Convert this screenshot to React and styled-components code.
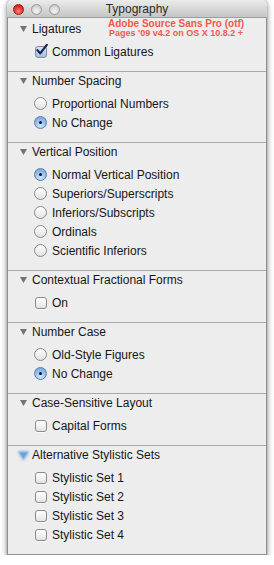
import React from "react";
import styled, { createGlobalStyle, css } from "styled-components";

const sections = [
    { title: "Ligatures", kind: "check", items: [{ label: "Common Ligatures", on: true }] },
    { title: "Number Spacing", kind: "radio", items: [{ label: "Proportional Numbers" }, { label: "No Change", on: true }] },
    {
        title: "Vertical Position",
        kind: "radio",
        items: [
            { label: "Normal Vertical Position", on: true },
            { label: "Superiors/Superscripts" },
            { label: "Inferiors/Subscripts" },
            { label: "Ordinals" },
            { label: "Scientific Inferiors" },
        ],
    },
    { title: "Contextual Fractional Forms", kind: "check", items: [{ label: "On" }] },
    { title: "Number Case", kind: "radio", items: [{ label: "Old-Style Figures" }, { label: "No Change", on: true }] },
    { title: "Case-Sensitive Layout", kind: "check", items: [{ label: "Capital Forms" }] },
    {
        title: "Alternative Stylistic Sets",
        kind: "check",
        focused: true,
        items: [
            { label: "Stylistic Set 1" },
            { label: "Stylistic Set 2" },
            { label: "Stylistic Set 3" },
            { label: "Stylistic Set 4" },
        ],
    },
];

export default function App() {
    return (
        <>
            <GlobalStyle />
            <Panel>
                <TitleBar>
                    <Lights>
                        <Light $color="red" />
                        <Light />
                        <Light />
                    </Lights>
                    <Title>Typography</Title>
                    <span />
                </TitleBar>
                <Note>
                    <NoteMain>Adobe Source Sans Pro (otf)</NoteMain>
                    <NoteSub>Pages '09 v4.2 on OS X 10.8.2 +</NoteSub>
                </Note>
                {sections.map((section, index) => (
                    <Section key={index} $first={index === 0}>
                        <Header>
                            <Disclosure focused={section.focused} />
                            {section.title}
                        </Header>
                        <Items>
                            {section.items.map((item, i) => (
                                <Row key={i}>
                                    {section.kind === "radio" ? (
                                        <Radio $on={item.on} />
                                    ) : (
                                        <Check $on={item.on}>
                                            {item.on && (
                                                <svg width="13" height="12" viewBox="0 0 13 12">
                                                    <path d="M2.5 6.2 L5.2 9.4 L11.8 0.8" fill="none" stroke="#1b2550" strokeWidth="2.2" strokeLinecap="round" strokeLinejoin="round" />
                                                </svg>
                                            )}
                                        </Check>
                                    )}
                                    <Label>{item.label}</Label>
                                </Row>
                            ))}
                        </Items>
                    </Section>
                ))}
            </Panel>
        </>
    );
}

function Disclosure({ focused }) {
    return (
        <Tri $focused={focused}>
            {focused ? (
                <svg width="11" height="9" viewBox="0 0 11 9">
                    <polygon points="0.8,1 10.2,1 5.5,8.3" fill="#6d9dd6" stroke="#9dc0ec" strokeWidth="1.2" strokeLinejoin="round" />
                </svg>
            ) : (
                <svg width="7" height="6" viewBox="0 0 7 6">
                    <polygon points="0,0 7,0 3.5,6" fill="#737373" />
                </svg>
            )}
        </Tri>
    );
}

const GlobalStyle = createGlobalStyle`
    body {
        margin: 0;
        background: #ffffff;
    }
`;

const Panel = styled.div`
    position: relative;
    width: 260px;
    margin-left: 7px;
    background: #ededed;
    border: 1px solid #8e8e8e;
    border-top: none;
    border-radius: 4px 4px 0 0;
    box-shadow: 0 3px 6px rgba(0, 0, 0, 0.45), 0 0 2px rgba(0, 0, 0, 0.25);
    font-family: "Liberation Sans", Arial, sans-serif;
    font-size: 12px;
    color: #161616;
    box-sizing: border-box;
`;

const TitleBar = styled.div`
    display: grid;
    grid-template-columns: 1fr auto 1fr;
    align-items: center;
    height: 18px;
    background: linear-gradient(#ececec, #d6d6d6 55%, #c6c6c6);
    border-bottom: 1px solid #9c9c9c;
    border-radius: 4px 4px 0 0;
    box-sizing: border-box;
    margin: 0 -1px;
`;

const Lights = styled.div`
    display: flex;
    gap: 7px;
    padding-left: 6px;
`;

const Light = styled.span`
    width: 11px;
    height: 11px;
    border-radius: 50%;
    box-sizing: border-box;
    ${(p) =>
        p.$color === "red"
            ? css`
                  background: radial-gradient(circle at 50% 70%, #ff8f86 0%, #ee3b32 45%, #b3150f 100%);
                  border: 1px solid #8d2420;
              `
            : css`
                  background: radial-gradient(circle at 50% 70%, #f4f4f4 0%, #dcdcdc 50%, #b9b9b9 100%);
                  border: 1px solid #9a9a9a;
              `}
`;

const Title = styled.div`
    font-size: 12px;
    color: #2a2a2a;
    line-height: 18px;
`;

const Note = styled.div`
    position: absolute;
    top: 19px;
    left: 100px;
    display: flex;
    flex-direction: column;
    color: #f2574b;
    font-weight: bold;
    line-height: 9.5px;
`;

const NoteMain = styled.span`
    font-size: 10px;
`;

const NoteSub = styled.span`
    font-size: 9px;
    padding-left: 1px;
`;

const Section = styled.div`
    border-top: ${(p) => (p.$first ? "none" : "1px solid #a9a9a9")};
    padding-top: ${(p) => (p.$first ? "2px" : "0")};
    padding-bottom: 10px;
`;

const Header = styled.div`
    display: flex;
    align-items: center;
    height: 18px;
    padding-left: 12px;
`;

const Tri = styled.span`
    display: flex;
    align-items: center;
    justify-content: center;
    width: 7px;
    margin-right: 5px;

    svg {
        flex-shrink: 0;
    }

    ${(p) =>
        p.$focused &&
        css`
            filter: drop-shadow(0 0 1.5px rgba(80, 140, 220, 0.8));
        `}
`;

const Items = styled.div`
    display: flex;
    flex-direction: column;
    padding-top: 4px;
`;

const Row = styled.div`
    display: flex;
    align-items: center;
    height: 19px;
    padding-left: 26px;
`;

const Check = styled.span`
    position: relative;
    width: 12px;
    height: 12px;
    margin: 0 5px 0 1px;
    border-radius: 3px;
    border: 1px solid #8a8a8a;
    box-sizing: border-box;
    background: ${(p) => (p.$on ? "linear-gradient(#d7e6f7, #9dc1ea)" : "linear-gradient(#ffffff, #e4e4e4)")};
    box-shadow: 0 1px 0 rgba(255, 255, 255, 0.6);

    svg {
        position: absolute;
        left: -1px;
        top: -3px;
    }
`;

const Radio = styled.span`
    position: relative;
    width: 13px;
    height: 13px;
    margin-right: 5px;
    border-radius: 50%;
    box-sizing: border-box;
    border: 1px solid ${(p) => (p.$on ? "#5b7fae" : "#8a8a8a")};
    background: ${(p) =>
        p.$on
            ? "radial-gradient(circle at 50% 80%, #cfe6ff 0%, #8fbcec 55%, #6f9fd6 100%)"
            : "linear-gradient(#ffffff, #e2e2e2)"};

    ${(p) =>
        p.$on &&
        css`
            &::after {
                content: "";
                position: absolute;
                left: 4px;
                top: 4px;
                width: 3px;
                height: 3px;
                border-radius: 50%;
                background: #111;
            }
        `}
`;

const Label = styled.span`
    white-space: nowrap;
`;
